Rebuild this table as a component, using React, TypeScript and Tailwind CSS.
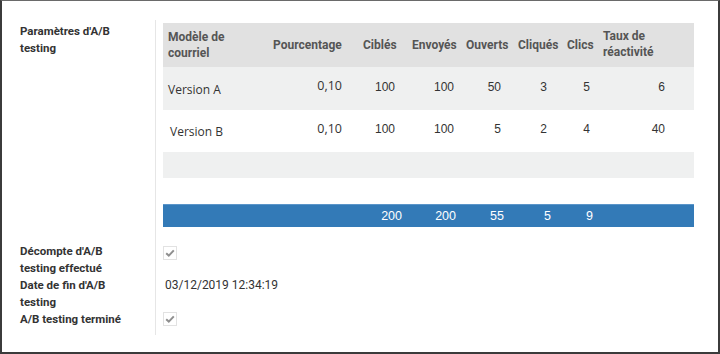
import React from "react";

const GRID = "grid grid-cols-[105px_90px_49px_54px_52px_49px_36px_96px]";

type Row = { name: string; pct: string; values: string[] };

const rows: Row[] = [
  { name: "Version A", pct: "0,10", values: ["100", "100", "50", "3", "5", "6"] },
  { name: "Version B", pct: "0,10", values: ["100", "100", "5", "2", "4", "40"] },
];

// right padding per numeric column, so the figures sit where the original ones do
const valuePad = ["pr-[12px]", "pr-[7px]", "pr-3", "pr-[15px]", "pr-2", "pr-[29px]"];
const totalPad = ["pr-[5px]", "pr-[5px]", "pr-[9px]", "pr-[11px]", "pr-[5px]"];
const totals = ["200", "200", "55", "5", "9"];

function Check() {
  return (
    <div className="flex h-[14px] w-[14px] items-center justify-center border border-[#e2e2e2] bg-white">
      <svg width="10" height="8" viewBox="0 0 10 8" fill="none">
        <path d="M1.2 4.3 L3.8 6.6 L8.8 1.4" stroke="#8f8f8f" strokeWidth="2" />
      </svg>
    </div>
  );
}

function AbTable() {
  return (
    <div className="w-[531px]">
      {/* header */}
      <div className={`${GRID} h-[44px] items-center bg-[#e1e1e1] font-['Roboto',sans-serif] text-[12px] font-bold leading-[16px] text-[#555]`}>
        <div className="pl-[5px]">
          Modèle de
          <br />
          courriel
        </div>
        <div className="pl-[5px] whitespace-nowrap">Pourcentage</div>
        <div className="pl-[5px] whitespace-nowrap">Ciblés</div>
        <div className="pl-[5px] whitespace-nowrap">Envoyés</div>
        <div className="pl-[5px] whitespace-nowrap">Ouverts</div>
        <div className="pl-[5px] whitespace-nowrap">Cliqués</div>
        <div className="pl-[5px] whitespace-nowrap">Clics</div>
        <div className="pl-[5px] pb-[3px]">
          Taux de
          <br />
          réactivité
        </div>
      </div>

      {rows.map((r, i) => (
        <div
          key={r.name}
          className={`${GRID} items-center text-[#333] ${i === 0 ? "h-[43px] bg-[#eff0f0]" : "h-[42px] bg-white"}`}
        >
          <div className={`pt-[2px] font-['Open_Sans',sans-serif] text-[12px] ${i === 0 ? "pl-[5px]" : "pl-[7px]"}`}>{r.name}</div>
          <div className="pr-4 pb-[4px] text-right font-['Open_Sans',sans-serif] text-[12.5px]">{r.pct}</div>
          {r.values.map((v, j) => (
            <div key={j} className={`pb-[4px] text-right font-['Liberation_Sans',Arial,sans-serif] text-[12px] ${valuePad[j]}`}>
              {v}
            </div>
          ))}
        </div>
      ))}

      <div className="h-[26px] bg-[#eff0f0]" />
      <div className="h-[26px]" />

      {/* totals */}
      <div className={`${GRID} h-[23px] items-center border-t border-[#5b95c9] bg-[#337ab7] font-['Liberation_Sans',Arial,sans-serif] text-[12.5px] text-white`}>
        <div />
        <div />
        {totals.map((t, j) => (
          <div key={j} className={`text-right ${totalPad[j]}`}>
            {t}
          </div>
        ))}
        <div />
      </div>
    </div>
  );
}

export default function App() {
  const label = "font-['Roboto',sans-serif] text-[11.5px] font-bold leading-[17px] text-[#333]";
  return (
    <div className="h-[354px] w-[720px] overflow-hidden border-2 border-t border-[#3b3b3b] border-t-[#6a6a6a] bg-white">
      <div className="grid grid-cols-[135px_auto] pl-[18px] pt-[19px]">
        {/* A/B parameters */}
        <div className={`${label} pt-[3px] leading-[16px]`}>
          Paramètres d'A/B
          <br />
          testing
        </div>
        <div className="border-l border-[#e6e6e6] pl-[7px] pt-[3px] pb-[16px]">
          <AbTable />
        </div>

        {/* count done */}
        <div className={label}>
          Décompte d'A/B
          <br />
          testing effectué
        </div>
        <div className="border-l border-[#e6e6e6] pl-[7px] pt-[3px]">
          <Check />
        </div>

        {/* end date */}
        <div className={label}>
          Date de fin d'A/B
          <br />
          testing
        </div>
        <div className="border-l border-[#e6e6e6] pl-[9px] font-['Roboto',sans-serif] text-[12px] leading-[17px] text-[#333]">
          03/12/2019 12:34:19
        </div>

        {/* finished */}
        <div className={label}>A/B testing terminé</div>
        <div className="border-l border-[#e6e6e6] pl-[7px] pt-[1px] pb-[9px]">
          <Check />
        </div>
      </div>
    </div>
  );
}
